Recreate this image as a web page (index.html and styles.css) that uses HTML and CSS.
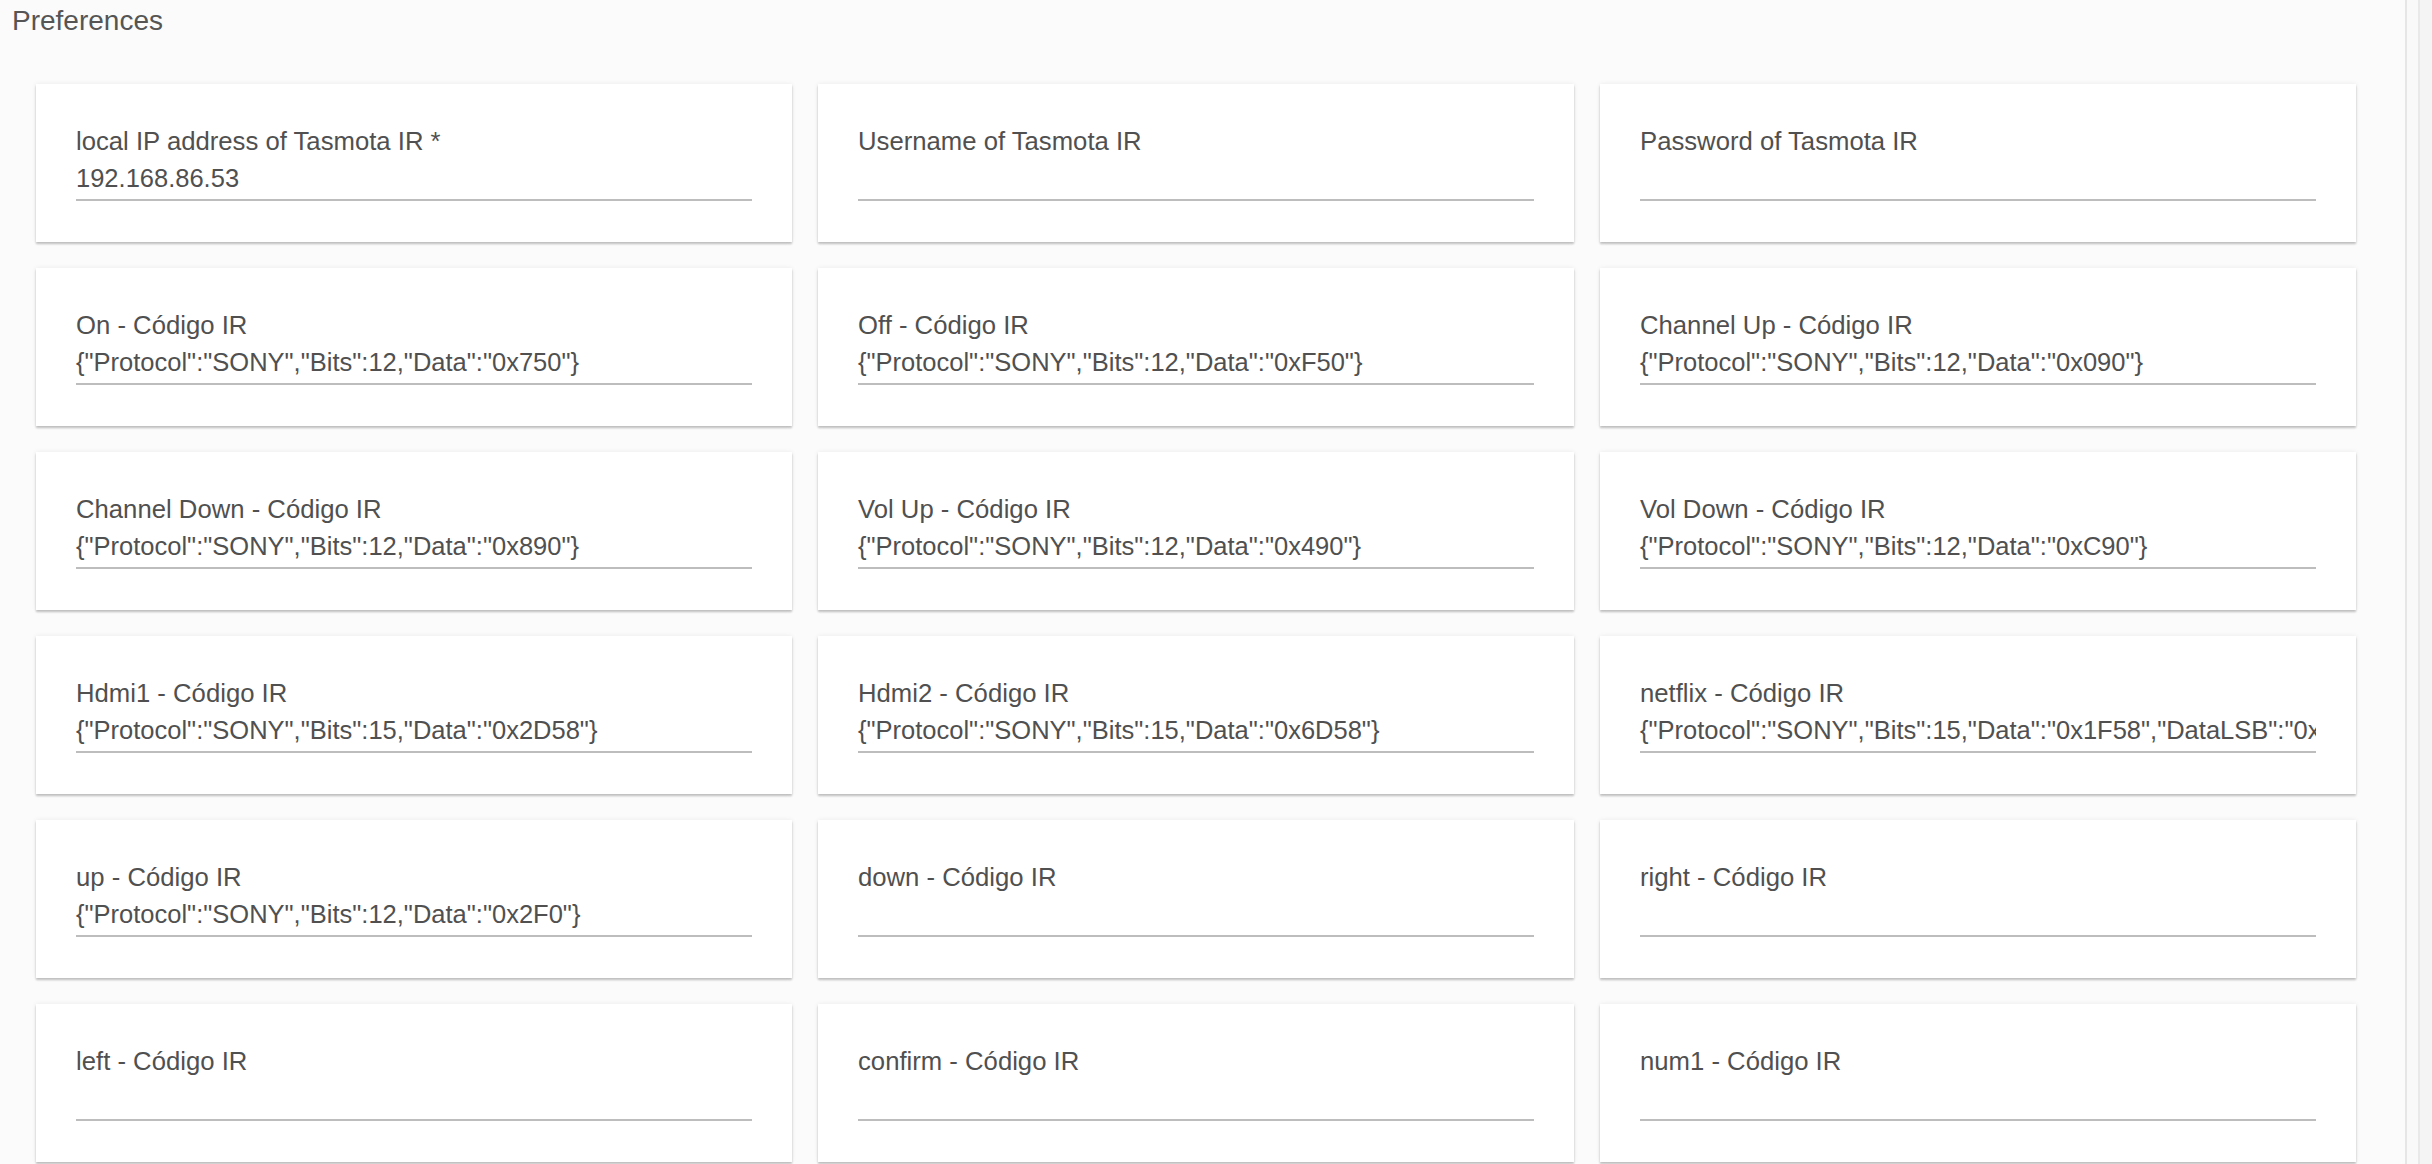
FILE: index.html
```html
<!DOCTYPE html>
<html lang="en">
<head>
  <meta charset="UTF-8">
  <meta name="viewport" content="width=device-width, initial-scale=1">
  <title>Preferences</title>
  <link rel="stylesheet" href="styles.css">
</head>

<body>

<div class="app">
  <main class="prefs">
    <h2 class="prefs-title">Preferences</h2>

    <div class="prefs-grid">
      <!-- connection -->
      <div class="pref-card">
        <label class="pref-label">local IP address of Tasmota IR *</label>
        <input class="pref-input" type="text" value="192.168.86.53">
      </div>
      <div class="pref-card">
        <label class="pref-label">Username of Tasmota IR</label>
        <input class="pref-input" type="text" value="">
      </div>
      <div class="pref-card">
        <label class="pref-label">Password of Tasmota IR</label>
        <input class="pref-input" type="password" value="">
      </div>

      <!-- IR codes -->
      <div class="pref-card">
        <label class="pref-label">On - Código IR</label>
        <input class="pref-input" type="text" value='{"Protocol":"SONY","Bits":12,"Data":"0x750"}'>
      </div>
      <div class="pref-card">
        <label class="pref-label">Off - Código IR</label>
        <input class="pref-input" type="text" value='{"Protocol":"SONY","Bits":12,"Data":"0xF50"}'>
      </div>
      <div class="pref-card">
        <label class="pref-label">Channel Up - Código IR</label>
        <input class="pref-input" type="text" value='{"Protocol":"SONY","Bits":12,"Data":"0x090"}'>
      </div>

      <div class="pref-card">
        <label class="pref-label">Channel Down - Código IR</label>
        <input class="pref-input" type="text" value='{"Protocol":"SONY","Bits":12,"Data":"0x890"}'>
      </div>
      <div class="pref-card">
        <label class="pref-label">Vol Up - Código IR</label>
        <input class="pref-input" type="text" value='{"Protocol":"SONY","Bits":12,"Data":"0x490"}'>
      </div>
      <div class="pref-card">
        <label class="pref-label">Vol Down - Código IR</label>
        <input class="pref-input" type="text" value='{"Protocol":"SONY","Bits":12,"Data":"0xC90"}'>
      </div>

      <div class="pref-card">
        <label class="pref-label">Hdmi1 - Código IR</label>
        <input class="pref-input" type="text" value='{"Protocol":"SONY","Bits":15,"Data":"0x2D58"}'>
      </div>
      <div class="pref-card">
        <label class="pref-label">Hdmi2 - Código IR</label>
        <input class="pref-input" type="text" value='{"Protocol":"SONY","Bits":15,"Data":"0x6D58"}'>
      </div>
      <div class="pref-card">
        <label class="pref-label">netflix - Código IR</label>
        <input class="pref-input" type="text" value='{"Protocol":"SONY","Bits":15,"Data":"0x1F58","DataLSB":"0x1AF8","Repeat":0}'>
      </div>

      <div class="pref-card">
        <label class="pref-label">up - Código IR</label>
        <input class="pref-input" type="text" value='{"Protocol":"SONY","Bits":12,"Data":"0x2F0"}'>
      </div>
      <div class="pref-card">
        <label class="pref-label">down - Código IR</label>
        <input class="pref-input" type="text" value="">
      </div>
      <div class="pref-card">
        <label class="pref-label">right - Código IR</label>
        <input class="pref-input" type="text" value="">
      </div>

      <div class="pref-card">
        <label class="pref-label">left - Código IR</label>
        <input class="pref-input" type="text" value="">
      </div>
      <div class="pref-card">
        <label class="pref-label">confirm - Código IR</label>
        <input class="pref-input" type="text" value="">
      </div>
      <div class="pref-card">
        <label class="pref-label">num1 - Código IR</label>
        <input class="pref-input" type="text" value="">
      </div>
    </div>
  </main>

  <!-- scrollbar track on the right -->
  <div class="scroll-track">
    <div class="scroll-rail"></div>
  </div>
</div>

</body>
</html>
```

FILE: styles.css
```css
html, body {
  height: 100%;
}
body {
  font-family: 'Liberation Sans', Arial, sans-serif;
  margin: 0;
  padding: 0;
  background: #fbfbfb;
  color: #555;
  overflow: hidden;
}
.app {
  display: flex;
  height: 100vh;
  overflow: hidden;
}
.prefs {
  flex: 1;
  overflow: hidden;
}
.prefs-title {
  margin: 0;
  padding: 3px 0 0 12px;
  font-size: 28px;
  line-height: 36px;
  font-weight: normal;
  color: #555;
}
.prefs-grid {
  display: grid;
  grid-template-columns: repeat(3, 756px);
  gap: 26px;
  padding: 45px 0 40px 36px;
}
.pref-card {
  background: #fff;
  padding: 43px 40px 41px;
  box-shadow: 0 2px 2px rgba(0,0,0,0.22), 0 0 5px rgba(0,0,0,0.07);
}
.pref-label {
  display: block;
  font-size: 25.7px;
  line-height: 28px;
  margin-bottom: 9px;
  color: #505050;
}
.pref-input {
  display: block;
  box-sizing: border-box;
  width: 100%;
  height: 37px;
  padding: 0 0 7px;
  margin: 0;
  border: none;
  border-bottom: 2px solid #bdbdbd;
  background: transparent;
  outline: none;
  font-family: 'Liberation Sans', Arial, sans-serif;
  font-size: 25.5px;
  line-height: 28px;
  color: #505050;
}
.scroll-track {
  width: 25px;
  border-left: 2px solid #e6e6e6;
  background: #f9f9f9;
  display: flex;
}
.scroll-rail {
  margin-left: 11px;
  width: 14px;
  border-left: 2px solid #e9e9e9;
  background: #f4f4f4;
}
```
